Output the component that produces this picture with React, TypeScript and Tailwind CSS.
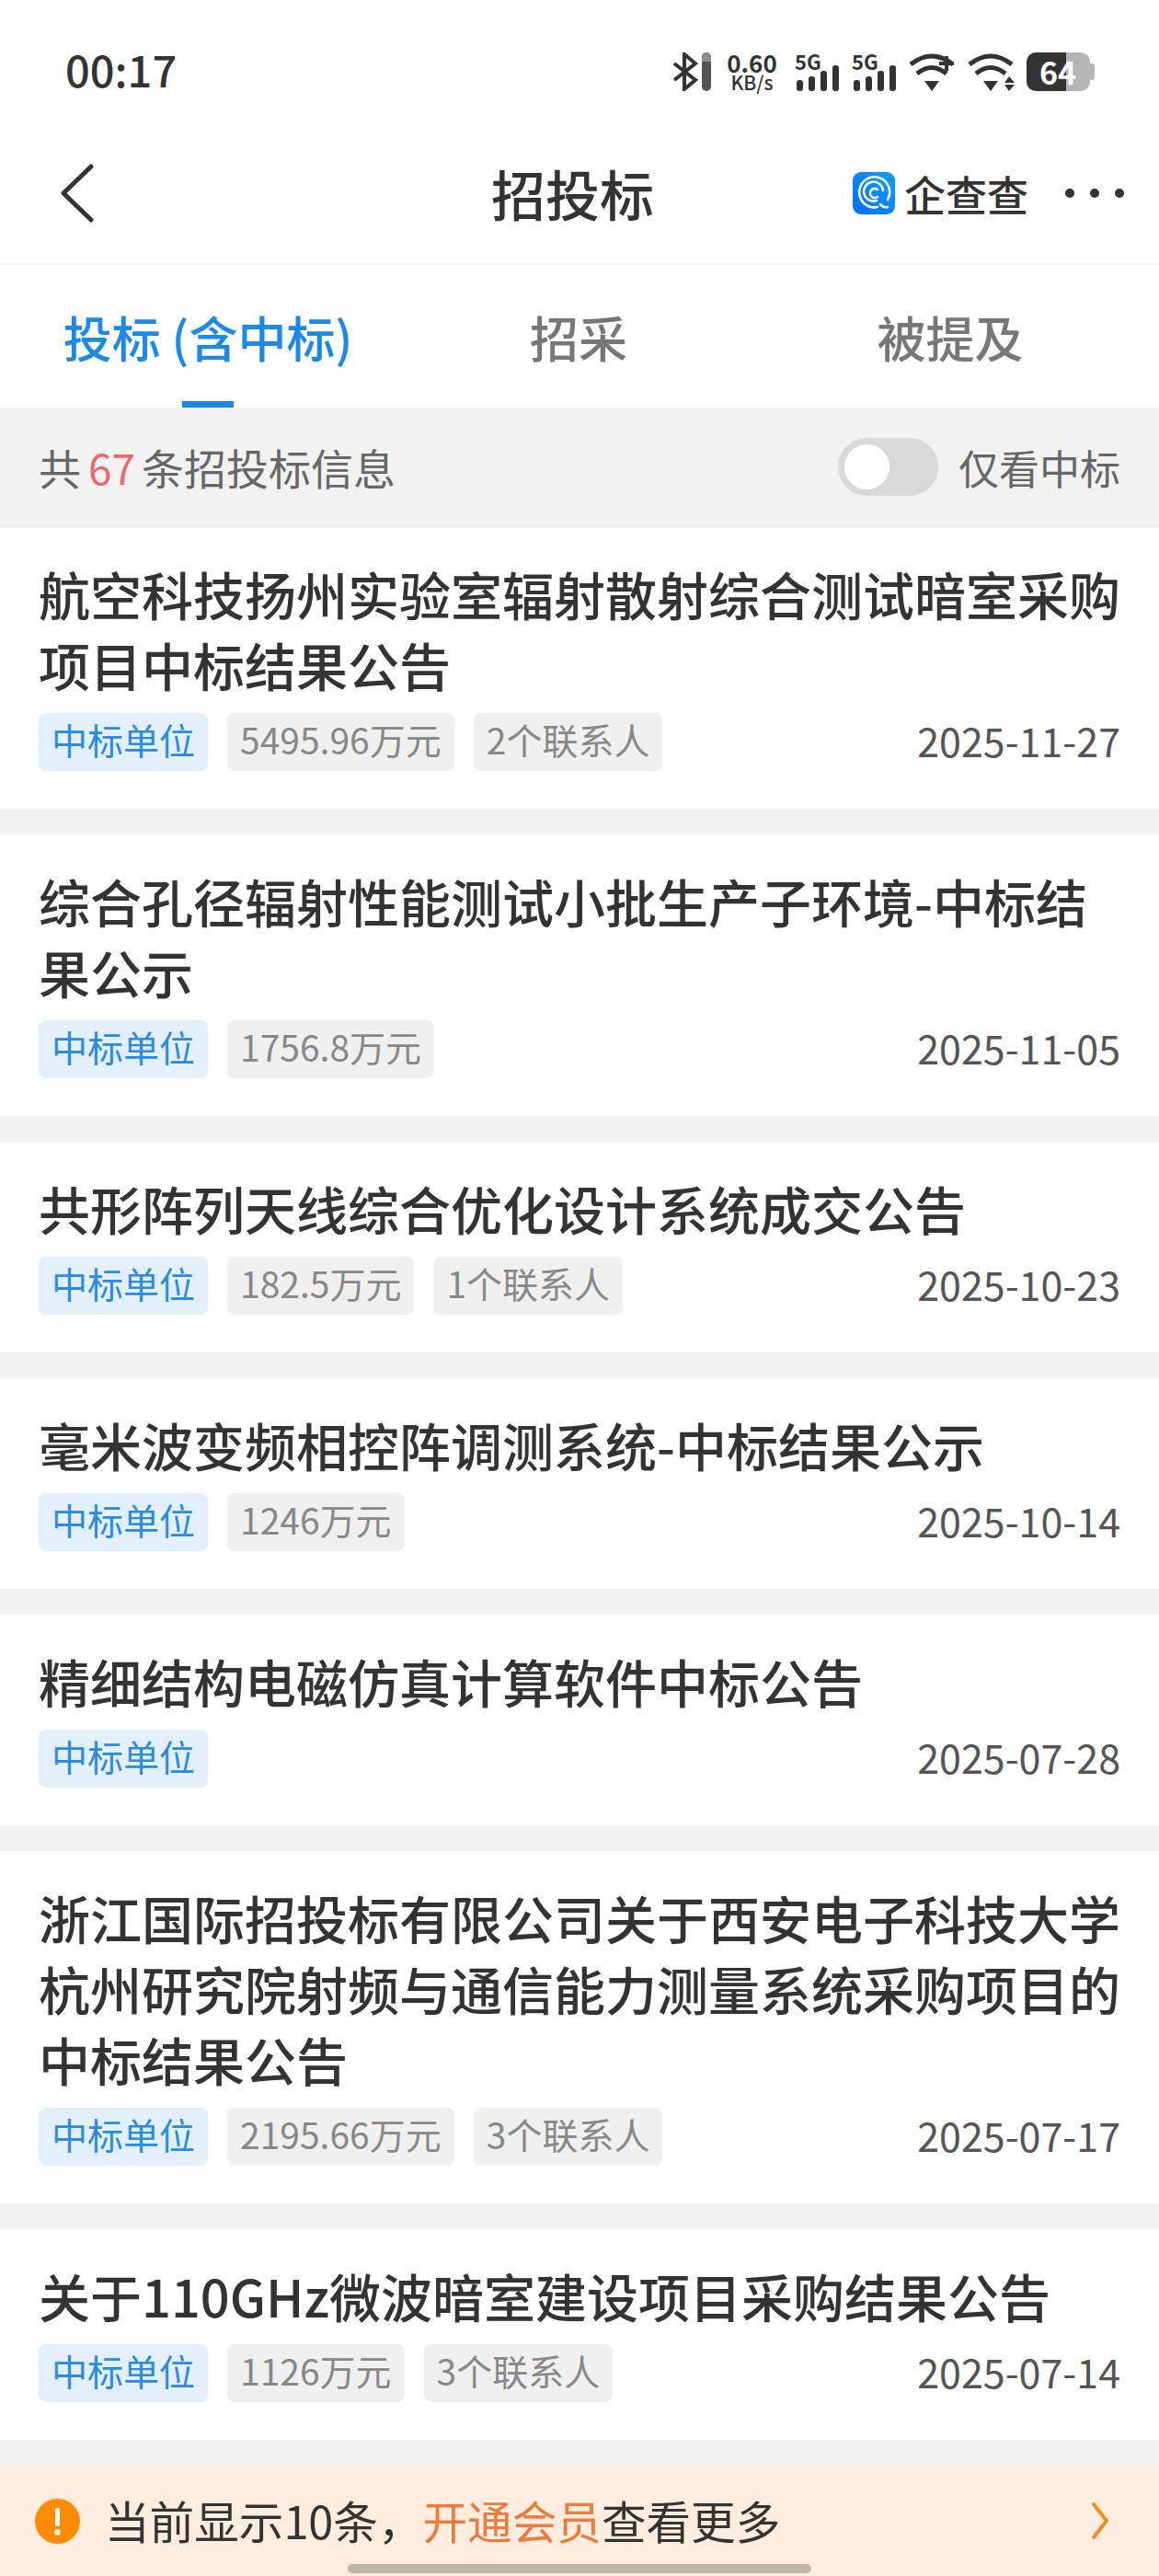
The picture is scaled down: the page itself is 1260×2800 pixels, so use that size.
import { ReactNode } from "react";

interface Bid {
  title: string;
  amount?: string;
  contacts?: string;
  date: string;
}

const bids: Bid[] = [
  {
    title: "航空科技扬州实验室辐射散射综合测试暗室采购项目中标结果公告",
    amount: "5495.96万元",
    contacts: "2个联系人",
    date: "2025-11-27",
  },
  {
    title: "综合孔径辐射性能测试小批生产子环境-中标结果公示",
    amount: "1756.8万元",
    date: "2025-11-05",
  },
  {
    title: "共形阵列天线综合优化设计系统成交公告",
    amount: "182.5万元",
    contacts: "1个联系人",
    date: "2025-10-23",
  },
  {
    title: "毫米波变频相控阵调测系统-中标结果公示",
    amount: "1246万元",
    date: "2025-10-14",
  },
  {
    title: "精细结构电磁仿真计算软件中标公告",
    date: "2025-07-28",
  },
  {
    title: "浙江国际招投标有限公司关于西安电子科技大学杭州研究院射频与通信能力测量系统采购项目的中标结果公告",
    amount: "2195.66万元",
    contacts: "3个联系人",
    date: "2025-07-17",
  },
  {
    title: "关于110GHz微波暗室建设项目采购结果公告",
    amount: "1126万元",
    contacts: "3个联系人",
    date: "2025-07-14",
  },
];

const Signal = () => (
  <div className="relative w-[48px] h-[42px]">
    <span className="absolute left-0 -top-[4px] text-[22px] leading-[26px] font-bold text-[#333]">
      5G
    </span>
    <svg width="48" height="42" viewBox="0 0 48 42" fill="#333">
      <rect x="2" y="30" width="7" height="12" rx="3" />
      <rect x="15" y="26" width="7" height="16" rx="3" />
      <rect x="28" y="20" width="7" height="22" rx="3" />
      <rect x="41" y="14" width="7" height="28" rx="3" />
    </svg>
  </div>
);

const Wifi = ({ children, width }: { children?: ReactNode; width: number }) => (
  <svg width={width} height="42" viewBox={`0 0 ${width} 42`} fill="none" stroke="#333" strokeWidth="5">
    <path d="M2 13 Q25 -5 48 13" />
    <path d="M9 23 Q25 10 41 23" />
    <path d="M25 42 L17 31 L33 31 Z" fill="#333" stroke="none" />
    {children}
  </svg>
);

const StatusBar = () => (
  <div className="flex justify-between items-start shrink-0 h-[134px] pt-[57px] pl-[71px] pr-[70px] bg-white">
    <span className="-mt-[3px] text-[47px] leading-[42px] font-medium text-[#333]">00:17</span>
    <div className="flex items-center h-[42px]">
      <svg width="28" height="42" viewBox="0 0 28 42" fill="none" stroke="#333" strokeWidth="4">
        <path d="M2 12 L25 30 L13 40 L13 2 L25 12 L2 30" />
      </svg>
      <div className="w-[10px] h-[42px] ml-[4px] rounded-full overflow-hidden bg-[#555]">
        <div className="h-[10px] bg-[#8c8c8c]" />
      </div>
      <div className="flex flex-col items-center w-[53px] ml-[18px] text-[#333]">
        <span className="text-[26px] leading-[22px] font-bold">0.60</span>
        <span className="text-[21px] leading-[20px] font-medium">KB/s</span>
      </div>
      <div className="ml-[20px]">
        <Signal />
      </div>
      <div className="ml-[14px]">
        <Signal />
      </div>
      <div className="ml-[14px]">
        <Wifi width={50}>
          <path d="M33 12 H49 M41 4 V20" strokeWidth="4" />
        </Wifi>
      </div>
      <div className="ml-[14px]">
        <Wifi width={52}>
          <path d="M45 26 L40 33 H51 Z M45 42 L40 35 H51 Z" fill="#333" stroke="none" />
        </Wifi>
      </div>
      <div className="relative flex items-center ml-[12px] w-[74px] h-[42px]">
        <div className="w-[43px] h-[42px] rounded-l-[10px] bg-[#333]" />
        <div className="w-[26px] h-[42px] rounded-r-[10px] bg-[#b5b5b5]" />
        <div className="w-[5px] h-[18px] rounded-r-[3px] bg-[#b5b5b5]" />
        <span className="absolute left-[14px] top-0 text-[34px] leading-[42px] font-bold text-white">64</span>
      </div>
    </div>
  </div>
);

const Logo = () => (
  <svg width="46" height="46" viewBox="0 0 46 46" fill="none">
    <defs>
      <linearGradient id="logo" x1="0" y1="1" x2="1" y2="0">
        <stop offset="0" stopColor="#0a6cf5" />
        <stop offset="1" stopColor="#0aa0fb" />
      </linearGradient>
    </defs>
    <rect width="46" height="46" rx="9" fill="url(#logo)" />
    <g stroke="#fff" strokeWidth="2.6" strokeLinecap="round">
      <path d="M27 38 A16.5 16.5 0 1 1 38 30" />
      <path d="M26 31 A10.5 10.5 0 1 1 33 20" />
      <path d="M27 19 A5 5 0 1 0 27 27" />
      <path d="M30 35 Q33 39 38 38" />
    </g>
  </svg>
);

const Header = () => (
  <div className="relative flex items-center shrink-0 h-[154px] bg-white border-b-2 border-[#f0f0f0]">
    <svg className="ml-[66px]" width="36" height="64" viewBox="0 0 36 64" fill="none" stroke="#333" strokeWidth="5" strokeLinecap="round" strokeLinejoin="round">
      <path d="M33 3 L3 32 L33 61" />
    </svg>
    <span className="absolute left-[534px] -mt-[2px] text-[59px] leading-none font-medium text-[#333]">招投标</span>
    <div className="flex items-center ml-auto">
      <Logo />
      <span className="ml-[10px] text-[45px] leading-none font-medium text-[#333]">企查查</span>
      <div className="flex gap-[17px] ml-[40px] mr-[38px]">
        <div className="w-[10px] h-[10px] rounded-full bg-[#333]" />
        <div className="w-[10px] h-[10px] rounded-full bg-[#333]" />
        <div className="w-[10px] h-[10px] rounded-full bg-[#333]" />
      </div>
    </div>
  </div>
);

const Tabs = () => (
  <div className="grid grid-cols-[452px_354px_454px] shrink-0 h-[155px] pt-[2px] bg-white text-[53px] text-[#777] font-medium">
    <div className="relative flex items-center justify-center text-[#1e88e5]">
      投标 (含中标)
      <div className="absolute bottom-0 left-[198px] w-[56px] h-[7px] bg-[#1e88e5]" />
    </div>
    <div className="flex items-center justify-center">招采</div>
    <div className="flex items-center justify-center">被提及</div>
  </div>
);

const InfoBar = () => (
  <div className="flex items-center justify-between shrink-0 h-[130px] px-[42px] bg-[#f2f2f2] border-b border-[#e8e8e8] text-[#666] text-[46px]">
    <div className="flex items-center">
      共<span className="ml-[8px] mr-[7px] text-[#e96a6a]">67</span>条招投标信息
    </div>
    <div className="flex items-center">
      <div className="flex items-center w-[109px] h-[63px] pl-[7px] rounded-full bg-[#d9d9d9]">
        <div className="w-[49px] h-[49px] rounded-full bg-white" />
      </div>
      <span className="ml-[22px] text-[44px]">仅看中标</span>
    </div>
  </div>
);

const BidCard = ({ bid }: { bid: Bid }) => (
  <div className="pt-[33px] pb-[41px] px-[42px] bg-white">
    <h2 className="text-[56px] leading-[77px] font-medium text-[#333]">{bid.title}</h2>
    <div className="flex items-center h-[63px] mt-[15px] text-[39px]">
      <span className="flex items-center h-[63px] px-[14px] pb-[6px] rounded-[8px] bg-[#e3f0fc] text-[#2a8be0]">中标单位</span>
      {bid.amount && (
        <span className="flex items-center h-[63px] px-[14px] pb-[6px] ml-[21px] rounded-[8px] bg-[#f0f0f0] text-[#888]">
          {bid.amount}
        </span>
      )}
      {bid.contacts && (
        <span className="flex items-center h-[63px] px-[14px] pb-[6px] ml-[21px] rounded-[8px] bg-[#f0f0f0] text-[#888]">
          {bid.contacts}
        </span>
      )}
      <span className="ml-auto pb-[6px] text-[43px] leading-[50px] text-[#555]">{bid.date}</span>
    </div>
  </div>
);

const VipBanner = () => (
  <div className="flex items-center h-[120px] pl-[38px] pr-[54px] bg-[#ffeedf]">
    <svg width="49" height="49" viewBox="0 0 49 49">
      <circle cx="24.5" cy="24.5" r="24.5" fill="#ff8c00" />
      <rect x="22" y="10" width="5" height="20" rx="2.5" fill="#fff" />
      <circle cx="24.5" cy="36.5" r="3.2" fill="#fff" />
    </svg>
    <span className="ml-[27px] pb-[2px] text-[48.6px] text-[#333]">
      当前显示10条，<span className="text-[#ee7a3e]">开通会员</span>查看更多
    </span>
    <svg className="ml-auto" width="20" height="40" viewBox="0 0 20 40" fill="none" stroke="#f09020" strokeWidth="4" strokeLinecap="round" strokeLinejoin="round">
      <path d="M3 2 L17 20 L3 38" />
    </svg>
  </div>
);

export default function App() {
  return (
    <div
      className="relative flex flex-col h-[2800px] w-[1260px] overflow-hidden bg-[#f2f2f2]"
      style={{ fontFamily: '"Noto Sans CJK SC", "Noto Sans", sans-serif' }}
    >
      <StatusBar />
      <Header />
      <Tabs />
      <InfoBar />
      <div className="flex flex-col gap-[28px] shrink-0">
        {bids.map((bid) => (
          <BidCard key={bid.title} bid={bid} />
        ))}
      </div>
      <div className="mt-[28px] shrink-0">
        <VipBanner />
      </div>
      <div className="absolute left-[378px] bottom-[3px] w-[504px] h-[10px] rounded-full bg-[#c2b5a8]" />
    </div>
  );
}
